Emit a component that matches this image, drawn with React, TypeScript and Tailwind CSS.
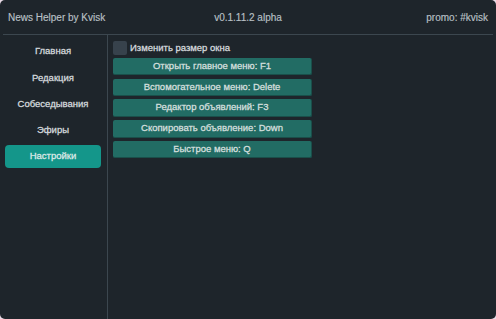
const navItems = ["Главная", "Редакция", "Собеседывания", "Эфиры", "Настройки"];

const hotkeys = [
  "Открыть главное меню: F1",
  "Вспомогательное меню: Delete",
  "Редактор объявлений: F3",
  "Скопировать объявление: Down",
  "Быстрое меню: Q",
];

export default function App() {
  const active = "Настройки";

  return (
    <div className="w-[496px] h-[319px] bg-[#e9dbe6]">
      <div
        className="w-full h-full rounded-[5px] bg-[#1e252b] flex flex-col overflow-hidden text-[9.5px] text-[#d3d8dc] [-webkit-text-stroke:0.3px_currentColor]"
        style={{ fontFamily: '"Liberation Sans", Arial, sans-serif' }}
      >
        {/* title bar */}
        <div className="h-[34px] grid grid-cols-[1fr_auto_1fr] items-center px-[8px] text-[10px] text-[#b9c0c5] [-webkit-text-stroke:0.15px_currentColor]">
          <span>News Helper by Kvisk</span>
          <span>v0.1.11.2 alpha</span>
          <span className="text-right">promo: #kvisk</span>
        </div>
        <div className="mx-[3px] h-px bg-[#3c474f]" />

        <div className="flex flex-1">
          {/* sidebar */}
          <div className="w-[108px] border-r border-[#3c474f] pl-[5px] pr-[6px] pt-[5px] flex flex-col gap-[3.25px]">
            {navItems.map((item) => (
              <div
                key={item}
                className={`h-[23px] flex items-center justify-center rounded-[4px] ${
                  item === active ? "bg-[#14968a] text-[#dbe8e6]" : ""
                }`}
              >
                {item}
              </div>
            ))}
          </div>

          {/* settings */}
          <div className="pl-[5px] pt-[6px] flex flex-col">
            <div className="flex items-center gap-[3px] h-[14px]">
              <div className="w-[14px] h-[14px] rounded-[2px] bg-[#37424c]" />
              <span>Изменить размер окна</span>
            </div>
            <div className="flex flex-col gap-[3.25px] mt-[2.75px]">
              {hotkeys.map((label) => (
                <div
                  key={label}
                  className="w-[199px] h-[17.5px] flex items-center justify-center rounded-[2px] bg-[#226c64] border-r border-b border-[#1a4f4a] text-[#d3dfdd]"
                >
                  {label}
                </div>
              ))}
            </div>
          </div>
        </div>
      </div>
    </div>
  );
}
